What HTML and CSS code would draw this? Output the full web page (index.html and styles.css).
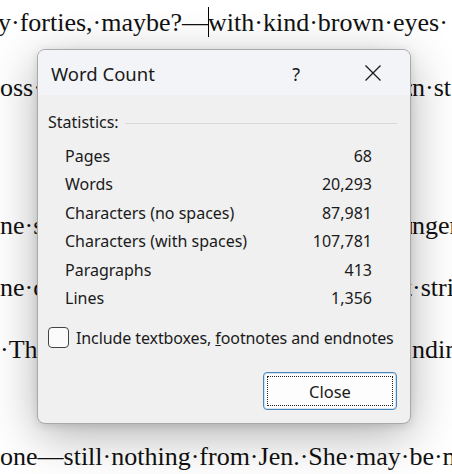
FILE: index.html
```html
<!DOCTYPE html>
<html>
<head>
<meta charset="utf-8">
<link rel="stylesheet" href="styles.css">
</head>
<body>
<div class="doc">
  <div class="line l1"><span class="lt">y·forties,·maybe?—<span class="caret"></span>with·kind·brown·eyes·</span></div>
  <div class="line l2"><span class="lt">oss·the·room·to·where·the·old·man·had·been·sitti</span><span class="rt">n·st</span></div>
  <div class="line l3"><span class="lt">ne·same·way·she·always·had,·with·a·small·frown·o</span><span class="rt">nger</span></div>
  <div class="line l4"><span class="lt">ne·crowd·began·to·thin·out·and·the·music·fell·qui</span><span class="rt">·stri</span></div>
  <div class="line l5"><span class="lt">·The·evening·air·was·cool·against·her·face·as·sh</span><span class="rt">ndin</span></div>
  <div class="line l6"><span class="lt">one—still·nothing·from·Jen.·She·may·be·m</span></div>
</div>

<div class="dialog">
  <div class="titlebar">
    <span class="title">Word Count</span>
    <span class="help">?</span>
    <svg class="close-x" width="18" height="18" viewBox="0 0 18 18"><path d="M1.5 1.5 L16.5 16.5 M16.5 1.5 L1.5 16.5" stroke="#1a1a1a" stroke-width="1.3" fill="none"/></svg>
  </div>
  <div class="body">
    <div class="group-head"><span>Statistics:</span><span class="rule"></span></div>
    <div class="stats">
      <div class="row"><span>Pages</span><span>68</span></div>
      <div class="row"><span>Words</span><span>20,293</span></div>
      <div class="row"><span>Characters (no spaces)</span><span>87,981</span></div>
      <div class="row"><span>Characters (with spaces)</span><span>107,781</span></div>
      <div class="row"><span>Paragraphs</span><span>413</span></div>
      <div class="row"><span>Lines</span><span>1,356</span></div>
    </div>
    <label class="check"><span class="box"></span><span class="check-text">Include textboxes, <u>f</u>ootnotes and endnotes</span></label>
    <div class="actions"><button class="btn"><span class="focus">Close</span></button></div>
  </div>
</div>
</body>
</html>
```

FILE: styles.css
```css
html, body {
  margin: 0;
  padding: 0;
}
body {
  width: 452px;
  height: 474px;
  overflow: hidden;
  background: #ffffff;
  position: relative;
}
.doc {
  font-family: "Liberation Serif", "Times New Roman", serif;
  font-size: 26px;
  line-height: 30px;
  color: #111;
}
.line {
  display: flex;
  white-space: nowrap;
  height: 30px;
  overflow: hidden;
  width: 452px;
}
.lt {
  display: block;
  width: 412px;
  flex: 0 0 412px;
  overflow: hidden;
}
.rt { display: block; }
.l1 { margin-top: 7px; }
.l1 .lt { margin-left: -2px; width: auto; flex: 0 0 auto; }
.l6 .lt { width: auto; flex: 0 0 auto; }
.l2 { margin-top: 36px; }
.l3 { margin-top: 108px; }
.l4 { margin-top: 32px; }
.l5 { margin-top: 32px; }
.l6 { margin-top: 77px; }
.caret {
  display: inline-block;
  width: 1px;
  height: 30px;
  background: #000;
  vertical-align: -6px;
  margin-right: -1px;
}

.dialog {
  position: absolute;
  left: 37px;
  top: 49px;
  width: 374px;
  height: 375px;
  box-sizing: border-box;
  border: 1px solid #a9a9a9;
  border-radius: 8px;
  background: #f0f0f0;
  box-shadow: 0 12px 48px rgba(0,0,0,0.30), 0 2px 8px rgba(0,0,0,0.12);
  font-family: "Noto Sans", "Open Sans", sans-serif;
  color: #1a1a1a;
  display: flex;
  flex-direction: column;
  overflow: hidden;
}
.titlebar {
  height: 45px;
  flex: 0 0 45px;
  background: #f3f4f7;
  display: flex;
  align-items: center;
  padding: 0 28px 0 13px;
}
.title {
  font-size: 18.5px;
  flex: 1;
  padding-top: 2px;
}
.help {
  font-size: 18px;
  margin-right: 64px;
  padding-top: 2px;
}
.close-x { display: block; }
.body {
  flex: 1;
  display: flex;
  flex-direction: column;
  padding: 17px 13px 13px 10px;
  font-size: 16px;
}
.group-head {
  display: flex;
  align-items: center;
  line-height: 20px;
  height: 20px;
}
.rule {
  flex: 1;
  height: 1px;
  background: #d8d8d8;
  margin: 2px 0 0 6px;
}
.stats {
  margin-top: 10px;
  padding: 0 25px 0 17px;
}
.row {
  display: flex;
  justify-content: space-between;
  height: 28.4px;
  line-height: 28.4px;
}
.check {
  display: flex;
  align-items: center;
  margin-top: 15px;
  gap: 7px;
  line-height: 20px;
  white-space: nowrap;
}
.check-text {
  letter-spacing: -0.1px;
}
.box {
  flex: 0 0 21px;
  width: 21px;
  height: 21px;
  box-sizing: border-box;
  border: 1px solid #444;
  border-radius: 4px;
  background: #fbfbfb;
}
.actions {
  margin-top: auto;
  display: flex;
  justify-content: flex-end;
}
.btn {
  width: 134px;
  height: 38px;
  box-sizing: border-box;
  border: 1px solid #4a86b8;
  border-radius: 4px;
  background: #fdfdfd;
  padding: 3px;
  font-family: "Noto Sans", "Open Sans", sans-serif;
  font-size: 16.5px;
  color: #1a1a1a;
  box-shadow: inset 0 0 0 1px #cfe3f2;
}
.focus {
  display: flex;
  align-items: center;
  justify-content: center;
  height: 100%;
  border: 1px dotted #222;
  box-sizing: border-box;
}
```
